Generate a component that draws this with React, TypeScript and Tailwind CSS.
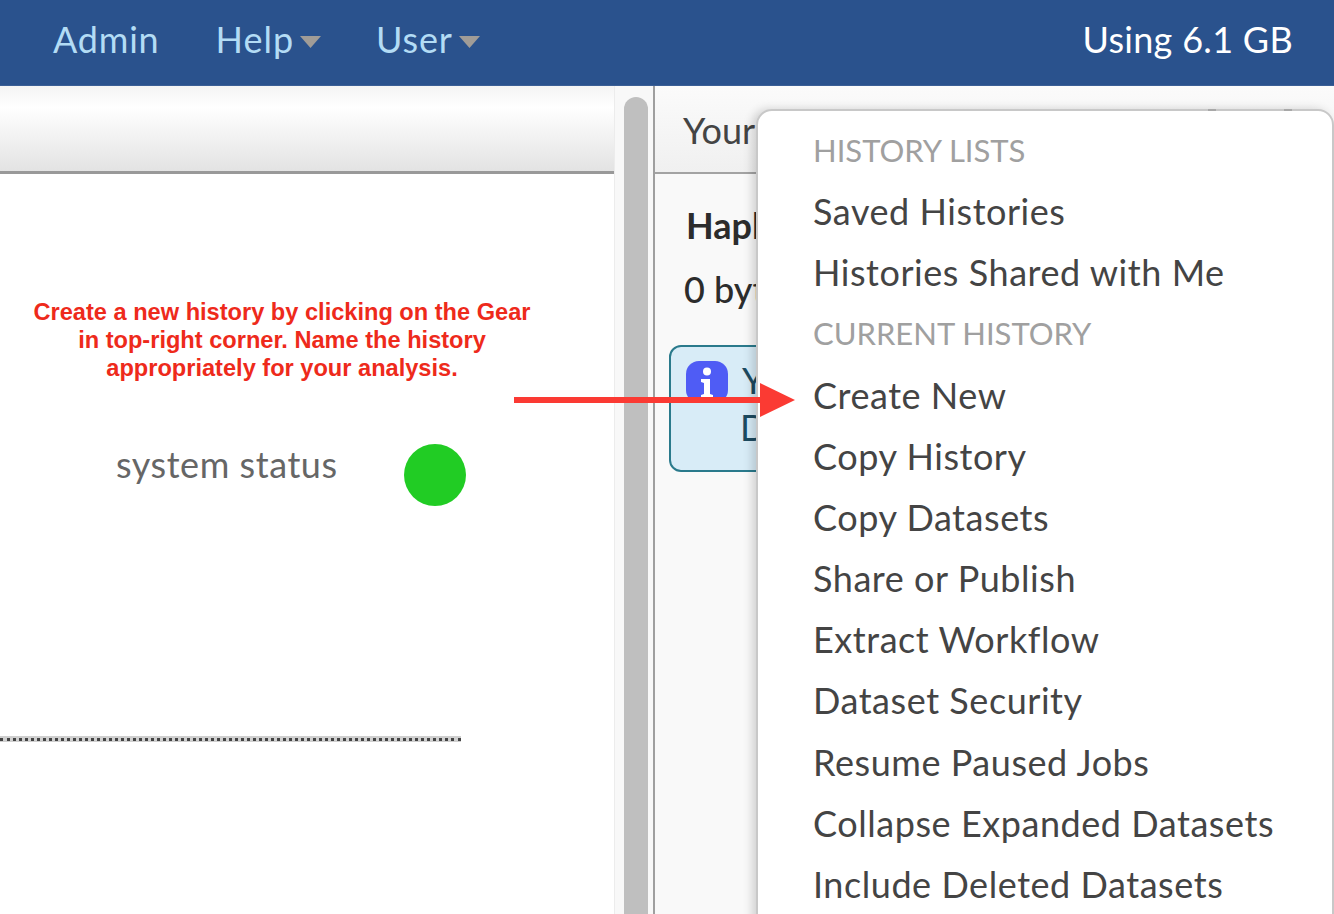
import React from "react";

const font = { fontFamily: '"Lato", "Open Sans", sans-serif' };

function Caret() {
  return (
    <svg width="21" height="12" viewBox="0 0 21 12" className="ml-[6px] mt-[7px] shrink-0">
      <polygon points="0,0 21,0 10.5,12" fill="#a09c97" />
    </svg>
  );
}

function Heading({ children }: { children: React.ReactNode }) {
  return <div className="h-[61.17px] leading-[61.17px] text-[31px] text-[#a0a0a0] pl-[55px] whitespace-nowrap">{children}</div>;
}

function Item({ children }: { children: React.ReactNode }) {
  return <div className="h-[61.17px] leading-[61.17px] text-[36px] tracking-[0.55px] text-[#444444] pl-[55px] whitespace-nowrap">{children}</div>;
}

export default function App() {
  return (
    <div className="relative w-[1334px] h-[914px] overflow-hidden bg-white flex flex-col" style={font}>
      <header className="h-[86px] shrink-0 bg-[#2a528d] flex items-center pl-[53px] pr-[41px] pb-[8px] text-[36px] border-b border-[#3b5f96]">
        <span className="text-[#b3dcf5] tracking-[0.8px]">Admin</span>
        <span className="text-[#b3dcf5] ml-[56px] tracking-[1px]">Help</span>
        <Caret />
        <span className="text-[#b3dcf5] ml-[55px] tracking-[0.8px]">User</span>
        <Caret />
        <span className="ml-auto text-white tracking-[0.3px]">Using 6.1 GB</span>
      </header>

      <div className="flex flex-1 min-h-0">
        <main className="w-[614px] shrink-0 flex flex-col">
          <div className="h-[88px] shrink-0 border-b-[3px] border-[#999999] bg-gradient-to-b from-[#f4f4f4] via-white via-25% to-[#e3e3e3]" />
          <div className="flex-1 flex flex-col">
            <p className="w-[564px] mt-[124px] text-center text-[23.6px] leading-[28px] font-bold text-[#ee2a1b]" style={{ fontFamily: '"Liberation Sans", sans-serif' }}>
              Create a new history by clicking on the Gear
              <br />
              in top-right corner. Name the history
              <br />
              appropriately for your analysis.
            </p>
            <div className="flex items-start mt-[62px] ml-[116px]">
              <span className="text-[36px] leading-[44px] tracking-[0.55px] text-[#666666] -mt-[2px] mb-[2px]">system status</span>
              <span className="ml-[66px] w-[62px] h-[62px] rounded-full bg-[#21cc24]" />
            </div>
            <div className="w-[461px] mt-[230px] h-[6px] bg-[#cfcfcf] flex items-center">
              <div className="w-full border-t-[3px] border-dotted border-[#444444]" />
            </div>
          </div>
        </main>

        <div className="w-[39px] shrink-0 flex bg-[#f8f8f8] border-l border-[#ececec]">
          <div className="w-[24px] ml-[9px] mt-[11px] rounded-t-[12px] bg-[#bfbfbf]" />
        </div>

        <aside className="flex-1 bg-[#f9f9f9] border-l-[2px] border-[#9f9f9f] min-w-0">
          <div className="h-[88px] border-b-[2px] border-[#a3a3a3] bg-gradient-to-b from-[#fbfbfb] to-[#f0f0f0] pl-[28px] pt-[22px] text-[36px] leading-[44px] text-[#444444] whitespace-nowrap">
            Your history
          </div>
          <div className="pl-[31px] pt-[29px] text-[36px] leading-[44px] font-bold text-[#2c2c2c]">Haploid</div>
          <div className="pl-[29px] pt-[20px] text-[36px] leading-[44px] font-medium text-[#2c2c2c]">0 bytes</div>
          <div className="ml-[14px] mt-[34px] w-[300px] h-[127px] rounded-[12px] border-[2px] border-[#2a7a8c] bg-[#d8ecf7] flex">
            <svg width="42" height="42" viewBox="0 0 42 42" className="ml-[15px] mt-[14px] shrink-0">
              <rect width="42" height="42" rx="13" fill="#4f5cf5" />
              <circle cx="21" cy="10.5" r="4" fill="#fff" />
              <path d="M15 18h9v15l3 1v3H15v-3l3-1V22l-3-1z" fill="#fff" />
            </svg>
            <div className="pl-[14px] pt-[10px] text-[36px] leading-[47px] text-[#1c4a60]">
              <div>You</div>
              <div className="-ml-[2px]">Da</div>
            </div>
          </div>
        </aside>
      </div>

      <div className="absolute left-[756px] top-[109px] w-[578px] h-[840px] pt-[9px] bg-white rounded-[16px] border-[2px] border-[#c8c8c8] shadow-[-4px_0_10px_rgba(0,0,0,0.16)]">
        <Heading>HISTORY LISTS</Heading>
        <Item>Saved Histories</Item>
        <Item>Histories Shared with Me</Item>
        <Heading>CURRENT HISTORY</Heading>
        <Item>Create New</Item>
        <Item>Copy History</Item>
        <Item>Copy Datasets</Item>
        <Item>Share or Publish</Item>
        <Item>Extract Workflow</Item>
        <Item>Dataset Security</Item>
        <Item>Resume Paused Jobs</Item>
        <Item>Collapse Expanded Datasets</Item>
        <Item>Include Deleted Datasets</Item>
      </div>

      <span className="absolute left-[1208px] top-[109px] w-[8px] h-[2px] bg-[#a8a8a8]" />
      <span className="absolute left-[1284px] top-[109px] w-[8px] h-[2px] bg-[#a8a8a8]" />

      <svg className="absolute left-[514px] top-[380px]" width="282" height="40" viewBox="0 0 282 40">
        <rect x="0" y="17" width="250" height="6" fill="#fb3a33" />
        <polygon points="246,3 281,20 246,37" fill="#fb3a33" />
      </svg>
    </div>
  );
}
